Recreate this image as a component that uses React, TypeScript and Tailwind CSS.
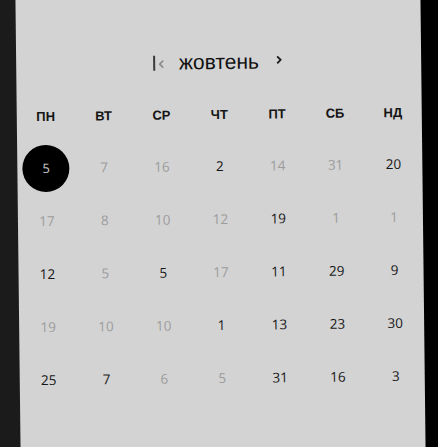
import React from 'react';

type Day = { n: number; muted?: boolean; selected?: boolean };

const weekDays = ['ПН', 'ВТ', 'СР', 'ЧТ', 'ПТ', 'СБ', 'НД'];

const weeks: Day[][] = [
    [{ n: 5, selected: true }, { n: 7, muted: true }, { n: 16, muted: true }, { n: 2 }, { n: 14, muted: true }, { n: 31, muted: true }, { n: 20 }],
    [{ n: 17, muted: true }, { n: 8, muted: true }, { n: 10, muted: true }, { n: 12, muted: true }, { n: 19 }, { n: 1, muted: true }, { n: 1, muted: true }],
    [{ n: 12 }, { n: 5, muted: true }, { n: 5 }, { n: 17, muted: true }, { n: 11 }, { n: 29 }, { n: 9 }],
    [{ n: 19, muted: true }, { n: 10, muted: true }, { n: 10, muted: true }, { n: 1 }, { n: 13 }, { n: 23 }, { n: 30 }],
    [{ n: 25 }, { n: 7 }, { n: 6, muted: true }, { n: 5, muted: true }, { n: 31 }, { n: 16 }, { n: 3 }],
];

const DayCell = ({ day }: { day: Day }) => {
    if (day.selected) {
        return (
            <div className="h-[53px] flex items-center justify-center">
                <div className="w-[47px] h-[47px] rounded-full bg-black flex items-center justify-center text-[13px] text-[#c8c8c8]">
                    {day.n}
                </div>
            </div>
        );
    }
    return (
        <div className={`h-[53px] flex items-center justify-center text-[13.5px] ${day.muted ? 'text-[#9c9c9c]' : 'text-[#161616]'}`}>
            {day.n}
        </div>
    );
};

const App = () => {
    return (
        <div className="w-[438px] h-[447px] overflow-hidden bg-[linear-gradient(to_right,#1b1b1b_50%,#000_50%)]">
            <div className="ml-[18px] w-[405px] h-[467px] -mt-[10px] bg-[#d3d3d3] -rotate-[0.65deg] pt-[58px] font-['Open_Sans',sans-serif]">
                <div className="h-[28px] flex items-center justify-center pr-[2px]">
                    <div className="w-[1.5px] h-[15px] bg-[#3a3a3a]" />
                    <svg width="6" height="9" viewBox="0 0 6 9" className="ml-[3px] mt-[2px]">
                        <path d="M5 1 L1.5 4.5 L5 8" fill="none" stroke="#8a8a8a" strokeWidth="1.6" />
                    </svg>
                    <span className="ml-[15px] text-[21px] text-[#111] font-['Liberation_Sans',sans-serif] leading-[28px]">жовтень</span>
                    <svg width="6" height="9" viewBox="0 0 6 9" className="ml-[17px] mb-[4px]">
                        <path d="M1 1 L4.5 4.5 L1 8" fill="none" stroke="#1a1a1a" strokeWidth="1.8" />
                    </svg>
                </div>

                <div className="grid grid-cols-7 mt-[24px] h-[30px] items-center">
                    {weekDays.map((d) => (
                        <div key={d} className="text-center text-[13px] font-bold text-[#151515] font-['Liberation_Sans',sans-serif]">
                            {d}
                        </div>
                    ))}
                </div>

                <div className="grid grid-cols-7 mt-[10px]">
                    {weeks.map((week, wi) =>
                        week.map((day, di) => <DayCell key={`${wi}-${di}`} day={day} />)
                    )}
                </div>
            </div>
        </div>
    );
};

export default App;
